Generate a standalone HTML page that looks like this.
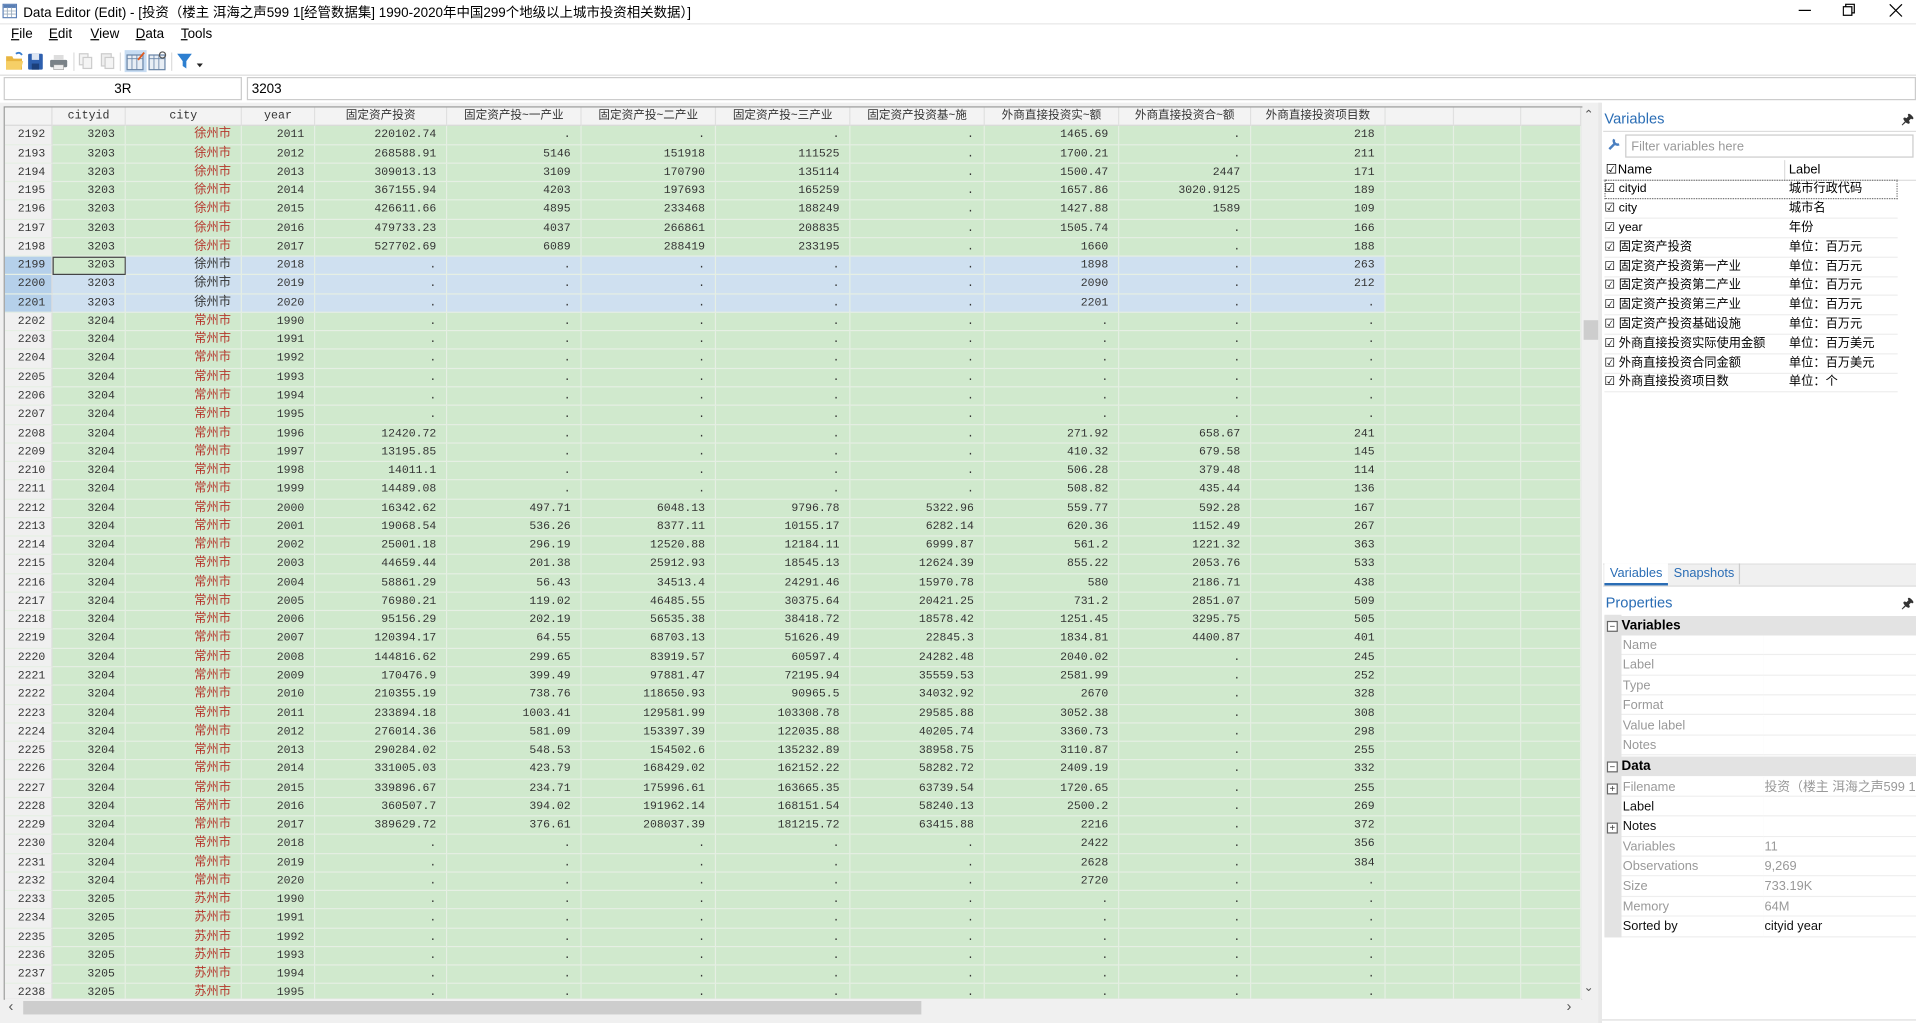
<!DOCTYPE html>
<html><head><meta charset="utf-8">
<style>
html,body{margin:0;padding:0;width:1916px;height:1023px;overflow:hidden;background:#fff}
#w{position:absolute;left:0;top:0;width:1568px;height:837px;transform:scale(1.22194,1.22222);transform-origin:0 0;font-family:"Liberation Sans","Noto Sans CJK SC",sans-serif;color:#000;background:#fff}
.a{position:absolute}
.t{font-size:11px;white-space:nowrap}
#grid{position:absolute;left:4px;top:88px;width:1290px;height:729px;overflow:hidden;background:#e4ece2;display:grid;grid-template-columns:39px 60px 95px 60px 108px 110px 110px 110px 110px 110px 108px 110px 56px 55px 49px;grid-auto-rows:15.28px;column-gap:0;row-gap:0;font:9.4px "Liberation Mono","Noto Sans CJK SC",monospace;color:#333}
#grid i{font-style:normal;display:block;background:#d0e9cd;border-right:1px solid #e6efe4;border-bottom:1px solid #e6efe4;box-sizing:border-box;text-align:right;padding-right:8px;line-height:14.5px;white-space:nowrap;overflow:hidden}
#grid .R i:first-child{background:#f0f0f0;padding-right:5px;color:#333;border-right:1px solid #ddd}
#grid .R i:nth-child(3){color:#b5362c;font-family:"Liberation Sans","Noto Sans CJK SC",sans-serif;font-size:10px}
#grid .H i{background:#f3f3f3!important;text-align:center;padding:0;font-family:"Liberation Sans","Noto Sans CJK SC",sans-serif!important;font-size:9.5px!important;color:#333!important;border-right:1px solid #e0e0e0;border-bottom:1px solid #d8d8d8;line-height:14.5px}
#grid .H i.m{font-family:"Liberation Mono",monospace!important}
#grid .R{display:contents}
#grid .s i{background:#cfe0f0}
#grid .s i:first-child{background:#b5d0ea}
#grid .s i:nth-child(3){color:#333}
#grid .s i:nth-child(n+13){background:#d0e9cd}
#grid .R i:nth-child(n+13){padding:0}
.cur{outline:1px solid #444;outline-offset:-1px;background:#d0e9cd!important}
.vr{position:absolute;left:1313px;width:240px;height:15.8px;font-size:10px;line-height:15.8px;border-bottom:1px solid #eee;box-sizing:border-box}
.vr span{position:absolute;left:151px}
.pr{position:absolute;left:1313px;width:255px;height:16.37px;font-size:10.5px;line-height:16px;box-sizing:border-box}
.pr b{font-weight:normal;position:absolute;left:14px;width:115px;top:0;bottom:0;background:#fff;border-bottom:1px solid #eee;border-right:1px solid #eee;padding-left:1px;color:#999}
.pr u{text-decoration:none;position:absolute;left:130px;right:0;top:0;bottom:0;background:#fff;border-bottom:1px solid #eee;padding-left:1px;color:#999;white-space:nowrap;overflow:hidden}
.pr.k b,.pr.k u{color:#111}
.pg{position:absolute;left:1313px;width:255px;height:16.37px;background:#e3e3e3;font-size:11px;font-weight:bold;line-height:16px}
.pg b{position:absolute;left:14px}
.bx{position:absolute;left:2px;top:4px;width:7px;height:7px;border:1px solid #666;background:#fff;font-size:8px;line-height:7px;text-align:center;font-weight:normal;color:#333}
</style></head><body><div id="w">
<svg class="a" style="left:2px;top:3px" width="12" height="12"><rect x="0.5" y="0.5" width="11" height="11" fill="#fff" stroke="#5a7fb5"/><rect x="1" y="1" width="10" height="2.5" fill="#5a7fb5"/><path d="M1 6h10M1 8.5h10M4 3v8M7.5 3v8" stroke="#9ab" stroke-width=".7"/></svg>
<div class="a t" style="left:19px;top:2px;font-size:11px">Data Editor (Edit) - [投资（楼主 洱海之声599 1[经管数据集] 1990-2020年中国299个地级以上城市投资相关数据）]</div>
<div class="a" style="left:1472px;top:8px;width:10px;height:1px;background:#000"></div>
<svg class="a" style="left:1508px;top:3px" width="11" height="11"><rect x="0.5" y="2.5" width="7" height="7" fill="none" stroke="#000"/><path d="M2.5 2.5V0.5h7v7h-2" fill="none" stroke="#000"/></svg>
<svg class="a" style="left:1546px;top:3px" width="11" height="11"><path d="M0.5 0.5l10 10M10.5 0.5l-10 10" stroke="#000"/></svg>
<div class="a" style="left:0;top:19px;width:1568px;height:1px;background:#e8e8e8"></div>
<div class="a t" style="left:9px;top:22px"><u>F</u>ile</div>
<div class="a t" style="left:40px;top:22px"><u>E</u>dit</div>
<div class="a t" style="left:74px;top:22px"><u>V</u>iew</div>
<div class="a t" style="left:111px;top:22px"><u>D</u>ata</div>
<div class="a t" style="left:148px;top:22px"><u>T</u>ools</div>
<svg class="a" style="left:3px;top:40px" width="180" height="20">
<path d="M2 6h5l1 2h7v9H2z" fill="#e8b540"/><path d="M2 10h14l-2 7H2z" fill="#f6cf66"/><path d="M10 4q3-2 5 1" stroke="#3a7fd0" fill="none" stroke-width="1.5"/>
<rect x="20" y="4" width="12" height="13" rx="1" fill="#2d5fae"/><rect x="23" y="4" width="6" height="5" fill="#dde6f3"/><rect x="23" y="12" width="6" height="5" fill="#1b3f7a"/>
<rect x="38" y="9" width="14" height="6" rx="1" fill="#7a8288"/><rect x="41" y="5" width="8" height="4" fill="#ddd"/><rect x="41" y="13" width="8" height="4" fill="#eee" stroke="#999" stroke-width=".5"/>
<line x1="57.5" y1="3" x2="57.5" y2="18" stroke="#ddd"/>
<rect x="62" y="4" width="7" height="9" fill="#f4f4f4" stroke="#ccc"/><rect x="65" y="7" width="7" height="9" fill="#f4f4f4" stroke="#ccc"/>
<rect x="80" y="4" width="8" height="10" fill="#eee" stroke="#ccc"/><rect x="83" y="7" width="7" height="9" fill="#f4f4f4" stroke="#ccc"/>
<line x1="95.5" y1="3" x2="95.5" y2="18" stroke="#ddd"/>
<rect x="99" y="1" width="18" height="18" fill="#c7dcf2"/><rect x="101" y="5" width="13" height="12" fill="#e8eef5" stroke="#6a86a8"/><path d="M101 8h13M105 5v12M109 5v12" stroke="#6a86a8" stroke-width=".7"/><path d="M110 9l5-6" stroke="#e05a20" stroke-width="1.5"/>
<rect x="119" y="5" width="13" height="12" fill="#e8eef5" stroke="#6a86a8"/><path d="M119 8h13M123 5v12M127 5v12" stroke="#6a86a8" stroke-width=".7"/><circle cx="130" cy="5" r="2.5" fill="none" stroke="#555"/>
<line x1="137.5" y1="3" x2="137.5" y2="18" stroke="#ddd"/>
<path d="M142 4h12l-4.5 6v6l-3-2v-4z" fill="#2d7fd0"/><path d="M158 12h5l-2.5 3z" fill="#222"/>
</svg>
<div class="a" style="left:0;top:61px;width:1568px;height:1px;background:#ddd"></div>
<div class="a" style="left:3px;top:63px;width:195px;height:19px;border:1px solid #ccc;box-sizing:border-box;text-align:center;font-size:11px;line-height:18px">3R</div>
<div class="a" style="left:202px;top:63px;width:1366px;height:19px;border:1px solid #ccc;box-sizing:border-box;padding-left:3px;font-size:11px;line-height:18px">3203</div>
<div class="a" style="left:0;top:84px;width:1310px;height:753px;background:#f0f0f0"></div>
<div class="a" style="left:3px;top:87px;width:1292px;height:731px;border:1px solid #999;box-sizing:border-box"></div>
<div id="grid">
<div class="R H"><i></i><i class="m">cityid</i><i class="m">city</i><i class="m">year</i><i>固定资产投资</i><i>固定资产投~一产业</i><i>固定资产投~二产业</i><i>固定资产投~三产业</i><i>固定资产投资基~施</i><i>外商直接投资实~额</i><i>外商直接投资合~额</i><i>外商直接投资项目数</i><i></i><i></i><i></i></div>
<div class="R"><i>2192</i><i>3203</i><i>徐州市</i><i>2011</i><i>220102.74</i><i>.</i><i>.</i><i>.</i><i>.</i><i>1465.69</i><i>.</i><i>218</i><i></i><i></i><i></i></div>
<div class="R"><i>2193</i><i>3203</i><i>徐州市</i><i>2012</i><i>268588.91</i><i>5146</i><i>151918</i><i>111525</i><i>.</i><i>1700.21</i><i>.</i><i>211</i><i></i><i></i><i></i></div>
<div class="R"><i>2194</i><i>3203</i><i>徐州市</i><i>2013</i><i>309013.13</i><i>3109</i><i>170790</i><i>135114</i><i>.</i><i>1500.47</i><i>2447</i><i>171</i><i></i><i></i><i></i></div>
<div class="R"><i>2195</i><i>3203</i><i>徐州市</i><i>2014</i><i>367155.94</i><i>4203</i><i>197693</i><i>165259</i><i>.</i><i>1657.86</i><i>3020.9125</i><i>189</i><i></i><i></i><i></i></div>
<div class="R"><i>2196</i><i>3203</i><i>徐州市</i><i>2015</i><i>426611.66</i><i>4895</i><i>233468</i><i>188249</i><i>.</i><i>1427.88</i><i>1589</i><i>109</i><i></i><i></i><i></i></div>
<div class="R"><i>2197</i><i>3203</i><i>徐州市</i><i>2016</i><i>479733.23</i><i>4037</i><i>266861</i><i>208835</i><i>.</i><i>1505.74</i><i>.</i><i>166</i><i></i><i></i><i></i></div>
<div class="R"><i>2198</i><i>3203</i><i>徐州市</i><i>2017</i><i>527702.69</i><i>6089</i><i>288419</i><i>233195</i><i>.</i><i>1660</i><i>.</i><i>188</i><i></i><i></i><i></i></div>
<div class="R s"><i>2199</i><i class="cur">3203</i><i>徐州市</i><i>2018</i><i>.</i><i>.</i><i>.</i><i>.</i><i>.</i><i>1898</i><i>.</i><i>263</i><i></i><i></i><i></i></div>
<div class="R s"><i>2200</i><i>3203</i><i>徐州市</i><i>2019</i><i>.</i><i>.</i><i>.</i><i>.</i><i>.</i><i>2090</i><i>.</i><i>212</i><i></i><i></i><i></i></div>
<div class="R s"><i>2201</i><i>3203</i><i>徐州市</i><i>2020</i><i>.</i><i>.</i><i>.</i><i>.</i><i>.</i><i>2201</i><i>.</i><i>.</i><i></i><i></i><i></i></div>
<div class="R"><i>2202</i><i>3204</i><i>常州市</i><i>1990</i><i>.</i><i>.</i><i>.</i><i>.</i><i>.</i><i>.</i><i>.</i><i>.</i><i></i><i></i><i></i></div>
<div class="R"><i>2203</i><i>3204</i><i>常州市</i><i>1991</i><i>.</i><i>.</i><i>.</i><i>.</i><i>.</i><i>.</i><i>.</i><i>.</i><i></i><i></i><i></i></div>
<div class="R"><i>2204</i><i>3204</i><i>常州市</i><i>1992</i><i>.</i><i>.</i><i>.</i><i>.</i><i>.</i><i>.</i><i>.</i><i>.</i><i></i><i></i><i></i></div>
<div class="R"><i>2205</i><i>3204</i><i>常州市</i><i>1993</i><i>.</i><i>.</i><i>.</i><i>.</i><i>.</i><i>.</i><i>.</i><i>.</i><i></i><i></i><i></i></div>
<div class="R"><i>2206</i><i>3204</i><i>常州市</i><i>1994</i><i>.</i><i>.</i><i>.</i><i>.</i><i>.</i><i>.</i><i>.</i><i>.</i><i></i><i></i><i></i></div>
<div class="R"><i>2207</i><i>3204</i><i>常州市</i><i>1995</i><i>.</i><i>.</i><i>.</i><i>.</i><i>.</i><i>.</i><i>.</i><i>.</i><i></i><i></i><i></i></div>
<div class="R"><i>2208</i><i>3204</i><i>常州市</i><i>1996</i><i>12420.72</i><i>.</i><i>.</i><i>.</i><i>.</i><i>271.92</i><i>658.67</i><i>241</i><i></i><i></i><i></i></div>
<div class="R"><i>2209</i><i>3204</i><i>常州市</i><i>1997</i><i>13195.85</i><i>.</i><i>.</i><i>.</i><i>.</i><i>410.32</i><i>679.58</i><i>145</i><i></i><i></i><i></i></div>
<div class="R"><i>2210</i><i>3204</i><i>常州市</i><i>1998</i><i>14011.1</i><i>.</i><i>.</i><i>.</i><i>.</i><i>506.28</i><i>379.48</i><i>114</i><i></i><i></i><i></i></div>
<div class="R"><i>2211</i><i>3204</i><i>常州市</i><i>1999</i><i>14489.08</i><i>.</i><i>.</i><i>.</i><i>.</i><i>508.82</i><i>435.44</i><i>136</i><i></i><i></i><i></i></div>
<div class="R"><i>2212</i><i>3204</i><i>常州市</i><i>2000</i><i>16342.62</i><i>497.71</i><i>6048.13</i><i>9796.78</i><i>5322.96</i><i>559.77</i><i>592.28</i><i>167</i><i></i><i></i><i></i></div>
<div class="R"><i>2213</i><i>3204</i><i>常州市</i><i>2001</i><i>19068.54</i><i>536.26</i><i>8377.11</i><i>10155.17</i><i>6282.14</i><i>620.36</i><i>1152.49</i><i>267</i><i></i><i></i><i></i></div>
<div class="R"><i>2214</i><i>3204</i><i>常州市</i><i>2002</i><i>25001.18</i><i>296.19</i><i>12520.88</i><i>12184.11</i><i>6999.87</i><i>561.2</i><i>1221.32</i><i>363</i><i></i><i></i><i></i></div>
<div class="R"><i>2215</i><i>3204</i><i>常州市</i><i>2003</i><i>44659.44</i><i>201.38</i><i>25912.93</i><i>18545.13</i><i>12624.39</i><i>855.22</i><i>2053.76</i><i>533</i><i></i><i></i><i></i></div>
<div class="R"><i>2216</i><i>3204</i><i>常州市</i><i>2004</i><i>58861.29</i><i>56.43</i><i>34513.4</i><i>24291.46</i><i>15970.78</i><i>580</i><i>2186.71</i><i>438</i><i></i><i></i><i></i></div>
<div class="R"><i>2217</i><i>3204</i><i>常州市</i><i>2005</i><i>76980.21</i><i>119.02</i><i>46485.55</i><i>30375.64</i><i>20421.25</i><i>731.2</i><i>2851.07</i><i>509</i><i></i><i></i><i></i></div>
<div class="R"><i>2218</i><i>3204</i><i>常州市</i><i>2006</i><i>95156.29</i><i>202.19</i><i>56535.38</i><i>38418.72</i><i>18578.42</i><i>1251.45</i><i>3295.75</i><i>505</i><i></i><i></i><i></i></div>
<div class="R"><i>2219</i><i>3204</i><i>常州市</i><i>2007</i><i>120394.17</i><i>64.55</i><i>68703.13</i><i>51626.49</i><i>22845.3</i><i>1834.81</i><i>4400.87</i><i>401</i><i></i><i></i><i></i></div>
<div class="R"><i>2220</i><i>3204</i><i>常州市</i><i>2008</i><i>144816.62</i><i>299.65</i><i>83919.57</i><i>60597.4</i><i>24282.48</i><i>2040.02</i><i>.</i><i>245</i><i></i><i></i><i></i></div>
<div class="R"><i>2221</i><i>3204</i><i>常州市</i><i>2009</i><i>170476.9</i><i>399.49</i><i>97881.47</i><i>72195.94</i><i>35559.53</i><i>2581.99</i><i>.</i><i>252</i><i></i><i></i><i></i></div>
<div class="R"><i>2222</i><i>3204</i><i>常州市</i><i>2010</i><i>210355.19</i><i>738.76</i><i>118650.93</i><i>90965.5</i><i>34032.92</i><i>2670</i><i>.</i><i>328</i><i></i><i></i><i></i></div>
<div class="R"><i>2223</i><i>3204</i><i>常州市</i><i>2011</i><i>233894.18</i><i>1003.41</i><i>129581.99</i><i>103308.78</i><i>29585.88</i><i>3052.38</i><i>.</i><i>308</i><i></i><i></i><i></i></div>
<div class="R"><i>2224</i><i>3204</i><i>常州市</i><i>2012</i><i>276014.36</i><i>581.09</i><i>153397.39</i><i>122035.88</i><i>40205.74</i><i>3360.73</i><i>.</i><i>298</i><i></i><i></i><i></i></div>
<div class="R"><i>2225</i><i>3204</i><i>常州市</i><i>2013</i><i>290284.02</i><i>548.53</i><i>154502.6</i><i>135232.89</i><i>38958.75</i><i>3110.87</i><i>.</i><i>255</i><i></i><i></i><i></i></div>
<div class="R"><i>2226</i><i>3204</i><i>常州市</i><i>2014</i><i>331005.03</i><i>423.79</i><i>168429.02</i><i>162152.22</i><i>58282.72</i><i>2409.19</i><i>.</i><i>332</i><i></i><i></i><i></i></div>
<div class="R"><i>2227</i><i>3204</i><i>常州市</i><i>2015</i><i>339896.67</i><i>234.71</i><i>175996.61</i><i>163665.35</i><i>63739.54</i><i>1720.65</i><i>.</i><i>255</i><i></i><i></i><i></i></div>
<div class="R"><i>2228</i><i>3204</i><i>常州市</i><i>2016</i><i>360507.7</i><i>394.02</i><i>191962.14</i><i>168151.54</i><i>58240.13</i><i>2500.2</i><i>.</i><i>269</i><i></i><i></i><i></i></div>
<div class="R"><i>2229</i><i>3204</i><i>常州市</i><i>2017</i><i>389629.72</i><i>376.61</i><i>208037.39</i><i>181215.72</i><i>63415.88</i><i>2216</i><i>.</i><i>372</i><i></i><i></i><i></i></div>
<div class="R"><i>2230</i><i>3204</i><i>常州市</i><i>2018</i><i>.</i><i>.</i><i>.</i><i>.</i><i>.</i><i>2422</i><i>.</i><i>356</i><i></i><i></i><i></i></div>
<div class="R"><i>2231</i><i>3204</i><i>常州市</i><i>2019</i><i>.</i><i>.</i><i>.</i><i>.</i><i>.</i><i>2628</i><i>.</i><i>384</i><i></i><i></i><i></i></div>
<div class="R"><i>2232</i><i>3204</i><i>常州市</i><i>2020</i><i>.</i><i>.</i><i>.</i><i>.</i><i>.</i><i>2720</i><i>.</i><i>.</i><i></i><i></i><i></i></div>
<div class="R"><i>2233</i><i>3205</i><i>苏州市</i><i>1990</i><i>.</i><i>.</i><i>.</i><i>.</i><i>.</i><i>.</i><i>.</i><i>.</i><i></i><i></i><i></i></div>
<div class="R"><i>2234</i><i>3205</i><i>苏州市</i><i>1991</i><i>.</i><i>.</i><i>.</i><i>.</i><i>.</i><i>.</i><i>.</i><i>.</i><i></i><i></i><i></i></div>
<div class="R"><i>2235</i><i>3205</i><i>苏州市</i><i>1992</i><i>.</i><i>.</i><i>.</i><i>.</i><i>.</i><i>.</i><i>.</i><i>.</i><i></i><i></i><i></i></div>
<div class="R"><i>2236</i><i>3205</i><i>苏州市</i><i>1993</i><i>.</i><i>.</i><i>.</i><i>.</i><i>.</i><i>.</i><i>.</i><i>.</i><i></i><i></i><i></i></div>
<div class="R"><i>2237</i><i>3205</i><i>苏州市</i><i>1994</i><i>.</i><i>.</i><i>.</i><i>.</i><i>.</i><i>.</i><i>.</i><i>.</i><i></i><i></i><i></i></div>
<div class="R"><i>2238</i><i>3205</i><i>苏州市</i><i>1995</i><i>.</i><i>.</i><i>.</i><i>.</i><i>.</i><i>.</i><i>.</i><i>.</i><i></i><i></i><i></i></div>
</div>
<div class="a" style="left:1294px;top:88px;width:14px;height:730px;background:#f0f0f0"></div>
<div class="a" style="left:1296px;top:89px;font-size:10px;color:#555">&#8963;</div>
<div class="a" style="left:1296px;top:262px;width:12px;height:16px;background:#cdcdcd"></div>
<div class="a" style="left:1296px;top:803px;font-size:10px;color:#555">&#8964;</div>
<div class="a" style="left:4px;top:817px;width:1290px;height:14px;background:#f0f0f0"></div>
<div class="a" style="left:7px;top:816px;font-size:12px;color:#555">&#8249;</div>
<div class="a" style="left:19px;top:819px;width:735px;height:11px;background:#cdcdcd"></div>
<div class="a" style="left:1282px;top:816px;font-size:12px;color:#555">&#8250;</div>
<div class="a" style="left:1308px;top:84px;width:3px;height:753px;background:#e8e8e8"></div>
<div class="a" style="left:1313px;top:90px;font-size:12px;color:#2a6db5">Variables</div>
<div class="a" style="left:1556px;top:89px;font-size:11px;font-weight:bold;color:#333">&#x1F588;</div>
<div class="a" style="left:1312px;top:107px;width:256px;height:1px;background:#ddd"></div>
<svg class="a" style="left:1315px;top:112px" width="12" height="12"><path d="M2 10l5-5M6 2a3 3 0 0 0 4 4" stroke="#4a7fc0" stroke-width="2" fill="none"/></svg>
<div class="a" style="left:1330px;top:110px;width:236px;height:19px;border:1px solid #ccc;box-sizing:border-box;font-size:10.5px;color:#999;padding-left:4px;line-height:18px">Filter variables here</div>
<div class="a" style="left:1312px;top:131px;width:256px;height:16px;border-bottom:1px solid #ddd;font-size:10.5px;line-height:16px"><span style="position:absolute;left:2px">&#9745;</span><span style="position:absolute;left:12px">Name</span><span style="position:absolute;left:148px;top:0;bottom:0;border-left:1px solid #ddd;padding-left:3px">Label</span></div>
<div class="vr" style="top:147px;outline:1px dotted #777;outline-offset:-1px;width:240px">☑ cityid<span>城市行政代码</span></div>
<div class="vr" style="top:163px">☑ city<span>城市名</span></div>
<div class="vr" style="top:179px">☑ year<span>年份</span></div>
<div class="vr" style="top:195px">☑ 固定资产投资<span>单位：百万元</span></div>
<div class="vr" style="top:211px">☑ 固定资产投资第一产业<span>单位：百万元</span></div>
<div class="vr" style="top:226px">☑ 固定资产投资第二产业<span>单位：百万元</span></div>
<div class="vr" style="top:242px">☑ 固定资产投资第三产业<span>单位：百万元</span></div>
<div class="vr" style="top:258px">☑ 固定资产投资基础设施<span>单位：百万元</span></div>
<div class="vr" style="top:274px">☑ 外商直接投资实际使用金额<span>单位：百万美元</span></div>
<div class="vr" style="top:290px">☑ 外商直接投资合同金额<span>单位：百万美元</span></div>
<div class="vr" style="top:305px">☑ 外商直接投资项目数<span>单位：个</span></div>
<div class="a" style="left:1312px;top:461px;width:256px;height:17px;background:#f0f0f0;border-top:1px solid #e0e0e0;border-bottom:1px solid #ddd"></div>
<div class="a" style="left:1313px;top:461px;width:52px;height:16px;background:#fff;border-bottom:2px solid #2a6db5;font-size:10.5px;color:#2a6db5;text-align:center;line-height:16px">Variables</div>
<div class="a" style="left:1366px;top:461px;width:57px;height:17px;border-right:1px solid #ccc;font-size:10.5px;color:#2a6db5;text-align:center;line-height:16px">Snapshots</div>
<div class="a" style="left:1314px;top:486px;font-size:12px;color:#2a6db5">Properties</div>
<div class="a" style="left:1556px;top:485px;font-size:11px;font-weight:bold;color:#333">&#x1F588;</div>
<div class="a" style="left:1313px;top:503px;width:14px;height:264px;background:#e3e3e3"></div>
<div class="pg" style="top:503.5px"><span class="bx">−</span><b>Variables</b></div>
<div class="pr" style="top:520px"><b>Name</b><u></u></div>
<div class="pr" style="top:536.4px"><b>Label</b><u></u></div>
<div class="pr" style="top:552.7px"><b>Type</b><u></u></div>
<div class="pr" style="top:569.1px"><b>Format</b><u></u></div>
<div class="pr" style="top:585.5px"><b>Value label</b><u></u></div>
<div class="pr" style="top:601.9px"><b>Notes</b><u></u></div>
<div class="pg" style="top:619px"><span class="bx">−</span><b>Data</b></div>
<div class="pr" style="top:635.6px"><span class="bx" style="top:5px">+</span><b>Filename</b><u>投资（楼主 洱海之声599 1[经管数据集]</u></div>
<div class="pr k" style="top:652px"><b>Label</b><u></u></div>
<div class="pr k" style="top:668.3px"><span class="bx" style="top:5px">+</span><b>Notes</b><u></u></div>
<div class="pr" style="top:684.7px"><b>Variables</b><u>11</u></div>
<div class="pr" style="top:701px"><b>Observations</b><u>9,269</u></div>
<div class="pr" style="top:717.4px"><b>Size</b><u>733.19K</u></div>
<div class="pr" style="top:733.8px"><b>Memory</b><u>64M</u></div>
<div class="pr k" style="top:750.2px"><b>Sorted by</b><u>cityid year</u></div>
<div class="a" style="left:1311px;top:834px;width:257px;height:1px;background:#ddd"></div>
</div></body></html>
